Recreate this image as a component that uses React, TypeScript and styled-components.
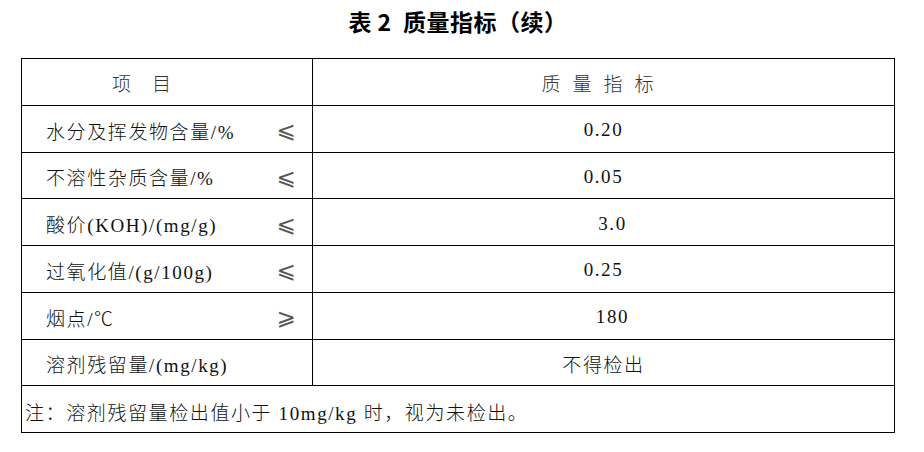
import styled, { createGlobalStyle } from 'styled-components';

const GlobalStyle = createGlobalStyle`
  html, body {
    margin: 0;
    padding: 0;
    background: #fff;
  }
  body {
    font-family: "Liberation Serif", "Noto Sans CJK SC", serif;
    color: #111;
  }
`

const Page = styled.div`
  width: 874px;
  padding-left: 21px;
`

const Title = styled.h1`
  margin: 0;
  height: 58px;
  padding-top: 5px;
  box-sizing: border-box;
  text-align: center;
  font-family: "Noto Sans CJK SC", sans-serif;
  font-size: 23px;
  font-weight: 700;
  line-height: 32px;
  letter-spacing: 0.5px;
  color: #000;
`

const Table = styled.table`
  width: 874px;
  border-collapse: collapse;
  table-layout: fixed;
  font-size: 19px;
  font-weight: 300;
  letter-spacing: 1.6px;
`

const Row = styled.tr`
  height: 46.75px;
`

const Cell = styled.td`
  border: 1px solid #000;
  padding: 0;
  vertical-align: middle;
  white-space: nowrap;
`

const ItemCell = styled(Cell)`
  border-right: none;
  padding-left: 24px;
  padding-top: 3px;
`

const SignCell = styled(Cell)`
  border-left: none;
  text-align: center;
  font-family: "DejaVu Sans", "Noto Sans CJK SC", sans-serif;
  font-size: 23px;
  font-weight: 400;
  letter-spacing: 0;
  color: #555;
  padding-top: 3px;
  padding-right: 2px;
`

const ValueCell = styled(Cell)<{ $nudge?: number }>`
  text-align: center;
  padding-left: ${p => p.$nudge ?? 0}px;
  padding-top: 3px;
`

const HeadCell = styled(Cell)<{ $spread: number; $offset?: number }>`
  text-align: center;
  color: #333;
  letter-spacing: ${p => p.$spread}px;
  padding-right: ${p => p.$offset ?? 0}px;
  padding-top: 2px;
`

const NoteCell = styled(Cell)`
  padding-left: 3px;
  padding-top: 4px;
`

type Item = { name: string; sign?: string; value: string; nudge?: number }

const items: Item[] = [
  { name: '水分及挥发物含量/%', sign: '⩽', value: '0.20' },
  { name: '不溶性杂质含量/%', sign: '⩽', value: '0.05' },
  { name: '酸价(KOH)/(mg/g)', sign: '⩽', value: '3.0', nudge: 18 },
  { name: '过氧化值/(g/100g)', sign: '⩽', value: '0.25' },
  { name: '烟点/℃', sign: '⩾', value: '180', nudge: 18 },
  { name: '溶剂残留量/(mg/kg)', value: '不得检出' },
]

export default function App() {
  return (
    <Page>
      <GlobalStyle />
      <Title>表 2&nbsp;&nbsp;质量指标（续）</Title>
      <Table>
        <colgroup>
          <col style={{ width: 241 }} />
          <col style={{ width: 50 }} />
          <col />
        </colgroup>
        <tbody>
          <Row>
            <HeadCell colSpan={2} $spread={1} $offset={50}>项　目</HeadCell>
            <HeadCell $spread={12}>质量指标</HeadCell>
          </Row>
          {items.map(item => (
            <Row key={item.name}>
              <ItemCell>{item.name}</ItemCell>
              <SignCell>{item.sign}</SignCell>
              <ValueCell $nudge={item.nudge}>{item.value}</ValueCell>
            </Row>
          ))}
          <Row>
            <NoteCell colSpan={3}>注：溶剂残留量检出值小于 10mg/kg 时，视为未检出。</NoteCell>
          </Row>
        </tbody>
      </Table>
    </Page>
  );
}
